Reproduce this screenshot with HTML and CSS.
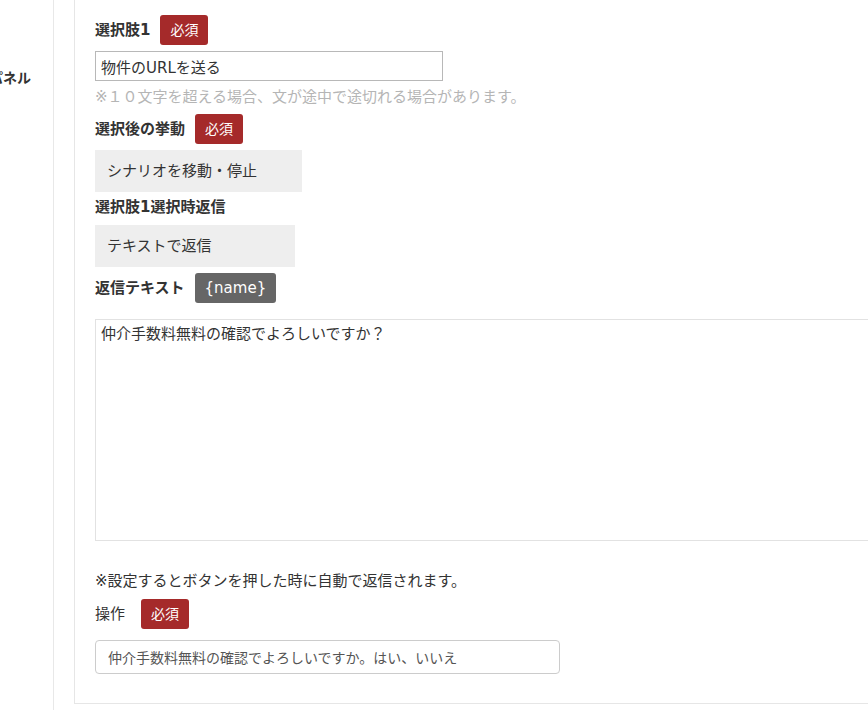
FILE: index.html
```html
<!DOCTYPE html>
<html lang="ja">
<head>
  <meta charset="UTF-8" />
  <meta name="viewport" content="width=device-width, initial-scale=1" />
  <title>選択肢設定</title>
  <link rel="stylesheet" href="styles.css">
</head>

<body>
  <div class="form-row">
    <div class="row-label">
      <span>パネル</span>
    </div>

    <div class="row-value">
      <div class="panel">
        <div class="field-head">
          <span class="field-title">選択肢1</span>
          <span class="badge">必須</span>
        </div>
        <input type="text" class="choice-input" value="物件のURLを送る">
        <p class="hint">※１０文字を超える場合、文が途中で途切れる場合があります。</p>

        <div class="field-head head-second">
          <span class="field-title">選択後の挙動</span>
          <span class="badge">必須</span>
        </div>
        <div class="select-box select-action">シナリオを移動・停止</div>

        <div class="field-title sub-title">選択肢1選択時返信</div>
        <div class="select-box select-reply">テキストで返信</div>

        <div class="field-head head-reply">
          <span class="field-title">返信テキスト</span>
          <span class="badge badge-var">{name}</span>
        </div>
        <textarea class="reply-text">仲介手数料無料の確認でよろしいですか？</textarea>

        <p class="note">※設定するとボタンを押した時に自動で返信されます。</p>

        <div class="field-head head-op">
          <span class="op-title">操作</span>
          <span class="badge badge-op">必須</span>
        </div>
        <input type="text" class="op-input" value="仲介手数料無料の確認でよろしいですか。はい、いいえ">
      </div>
    </div>
  </div>
</body>
</html>
```

FILE: styles.css
```css
html, body {
  margin: 0;
  padding: 0;
  overflow: hidden;
  background-color: #fff;
}

body {
  font-family: "DejaVu Sans", "Noto Sans CJK JP", sans-serif;
  color: #333;
  font-size: 15px;
  width: 868px;
  height: 710px;
}

.form-row {
  display: flex;
  height: 710px;
}

.row-label {
  width: 54px;
  flex-shrink: 0;
  display: flex;
  justify-content: flex-end;
  align-items: flex-start;
  padding: 68px 22px 0 0;
  box-sizing: border-box;
  border-right: 1px solid #e8e8e8;
  font-size: 14px;
  font-weight: bold;
  line-height: 20px;
  white-space: nowrap;
}

.row-value {
  padding-left: 20px;
  flex-shrink: 0;
}

.panel {
  width: 900px;
  border-left: 1px solid #e6e6e6;
  border-bottom: 1px solid #e6e6e6;
  padding: 15px 0 29px 20px;
}

.field-head {
  display: flex;
  align-items: center;
  height: 30px;
}

.field-title {
  font-weight: bold;
  font-size: 15px;
  line-height: 20px;
}

.badge {
  display: inline-block;
  margin-left: 10px;
  padding: 0 10px;
  height: 30px;
  line-height: 30px;
  border-radius: 3px;
  background-color: #a52a2a;
  color: #fff;
  font-size: 14px;
}

.badge-var {
  background-color: #666;
  font-size: 15px;
}

.choice-input {
  display: block;
  margin-top: 6px;
  width: 348px;
  height: 30px;
  box-sizing: border-box;
  border: 1px solid #b8b8b8;
  border-radius: 0;
  padding: 0 5px;
  font-family: inherit;
  font-size: 15px;
  color: #333;
  outline: none;
}

.hint {
  margin: 6px 0 0;
  line-height: 20px;
  color: #b5b5b5;
  font-size: 15px;
}

.head-second {
  margin-top: 7px;
}

.select-box {
  margin-top: 6px;
  height: 42px;
  line-height: 42px;
  padding-left: 12px;
  box-sizing: border-box;
  background-color: #eee;
  font-size: 15px;
}

.select-action {
  width: 207px;
}

.select-reply {
  width: 200px;
  margin-top: 8px;
}

.sub-title {
  margin-top: 5px;
}

.head-reply {
  margin-top: 6px;
}

.reply-text {
  display: block;
  margin-top: 16px;
  width: 800px;
  height: 222px;
  box-sizing: border-box;
  border: 1px solid #e2e2e2;
  padding: 4px 5px;
  font-family: inherit;
  font-size: 15px;
  line-height: 20px;
  color: #333;
  resize: none;
  outline: none;
}

.note {
  margin: 30px 0 0;
  line-height: 20px;
  font-size: 15px;
}

.head-op {
  margin-top: 8px;
}

.op-title {
  font-size: 15px;
  line-height: 20px;
}

.badge-op {
  margin-left: 16px;
}

.op-input {
  display: block;
  margin-top: 11px;
  width: 465px;
  height: 34px;
  box-sizing: border-box;
  border: 1px solid #ccc;
  border-radius: 4px;
  padding: 0 12px;
  font-family: inherit;
  font-size: 14px;
  color: #555;
  outline: none;
}
```
